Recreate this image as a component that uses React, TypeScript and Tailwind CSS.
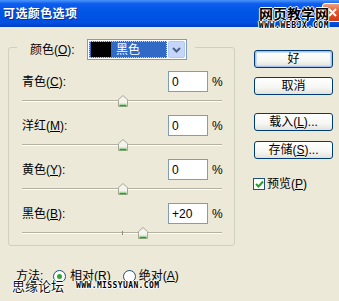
import React from "react";

const FONT = "font-['Liberation_Sans','Noto_Sans_CJK_SC',sans-serif]";

function Slider({ value }: { value: number }) {
  const left = 100 + value - 4.5;
  return (
    <div className="relative w-[200px] h-[18px] ml-[13px]">
      <div className="absolute left-0 right-0 top-[8px] h-[2px] border-t border-[#b4b1a2] bg-white"></div>
      <div className="absolute left-[100px] top-[7px] w-px h-[4px] bg-[#8a8778]"></div>
      <svg className="absolute top-[3px]" style={{ left }} width="10" height="12" viewBox="0 0 10 12">
        <path d="M0.5 4.5 L5 0.5 L9.5 4.5 L9.5 11.5 L0.5 11.5 Z" fill="#f4f3ee" stroke="#a9a795" />
        <path d="M1.5 10.5 L8.5 10.5" stroke="#21a121" strokeWidth="1.5" />
        <path d="M1.5 9.2 L8.5 9.2" stroke="#8ed88e" strokeWidth="1" />
      </svg>
    </div>
  );
}

function Row({ label, k, value, pos }: { label: string; k: string; value: string; pos: number }) {
  return (
    <div className="flex flex-col">
      <div className="flex items-center h-[21px] pl-[13px]">
        <span className="w-[146px] text-[12px] text-black leading-none">
          {label}(<u>{k}</u>):
        </span>
        <div className="w-[40px] h-[21px] border border-[#7f9db9] bg-white flex items-center pl-[3px] text-[12px] text-black">
          {value}
        </div>
        <span className="ml-[4px] text-[12px] text-black">%</span>
      </div>
      <Slider value={pos} />
    </div>
  );
}

function Btn({ children, def }: { children: React.ReactNode; def?: boolean }) {
  return (
    <div
      className={`w-[79px] h-[18px] rounded-[3px] border border-[#003c74] flex items-center justify-center text-[12px] text-black bg-[linear-gradient(180deg,#ffffff_0%,#f6f6f3_60%,#e3e2da_100%)] ${
        def ? "shadow-[inset_0_0_0_1px_#a7c2f0,inset_0_0_0_2px_#cddcf7]" : ""
      }`}
    >
      {children}
    </div>
  );
}

export default function App() {
  return (
    <div className={`relative w-[339px] h-[301px] overflow-hidden bg-[#ece9d8] ${FONT}`}>
      {/* Title bar */}
      <div className="relative h-[27px] flex items-center bg-[linear-gradient(180deg,#4a96fb_0%,#0e5cee_14%,#0055e5_45%,#004fe0_85%,#003fc2_100%)]">
        <span className="pl-[3px] text-[12px] font-bold text-white tracking-[0.4px] [text-shadow:1px_1px_0_#0a2c8a]">
          可选颜色选项
        </span>
        <div className="flex-1"></div>
        <div className="w-[21px] h-[19px] -mr-[4px] mb-[3px] rounded-[3px] border border-white bg-[linear-gradient(180deg,#f0a080_0%,#e2572f_45%,#cc3a18_100%)] flex items-center justify-center">
          <svg width="11" height="11" viewBox="0 0 11 11">
            <path d="M2 2 L9 9 M9 2 L2 9" stroke="#fff" strokeWidth="2" />
          </svg>
        </div>
        {/* watermark */}
        <div className="absolute left-[257px] top-[5px] w-[74px] flex flex-col items-center">
          <span className="text-[14px] leading-[16px] font-bold text-black font-['Noto_Sans_CJK_SC',sans-serif] [text-shadow:1px_0_0_#fff,-1px_0_0_#fff,0_1px_0_#fff,0_-1px_0_#fff]">
            网页教学网
          </span>
          <span className="text-[8px] leading-[9px] font-bold text-black tracking-[0.6px] font-['DejaVu_Sans_Mono',monospace] [text-shadow:1px_0_0_#fff,-1px_0_0_#fff,0_1px_0_#fff,0_-1px_0_#fff]">
            WWW.WEBJX.COM
          </span>
        </div>
      </div>

      {/* Body */}
      <div className="flex">
        <div className="flex flex-col ml-[8px] w-[227px]">
          <fieldset className="mt-[7px] border border-[#d0d0bf] rounded-[3px] pb-[3px]">
            <legend className="ml-[8px] pl-[13px] pr-[8px] pt-[5px]">
              <div className="flex items-center">
                <span className="w-[57px] text-[12px] text-black">
                  颜色(<u>O</u>):
                </span>
                <div className="w-[100px] h-[21px] border border-[#7f9db9] bg-white flex items-center p-[1px]">
                  <div className="flex-1 h-full bg-[#316ac5] border border-dotted border-[#c9d5ea] flex items-center pl-[1px]">
                    <div className="w-[20px] h-[15px] bg-black"></div>
                    <span className="ml-[5px] text-[12px] text-white">黑色</span>
                  </div>
                  <div className="w-[17px] h-full ml-[1px] rounded-[2px] bg-[#c6d6fb] border border-[#b4c8f4] flex items-center justify-center">
                    <svg width="9" height="6" viewBox="0 0 9 6">
                      <path d="M1 1 L4.5 4.5 L8 1" stroke="#4d6185" strokeWidth="2" fill="none" />
                    </svg>
                  </div>
                </div>
              </div>
            </legend>
            <div className="flex flex-col gap-[5px] pt-[11px]">
              <Row label="青色" k="C" value="0" pos={0} />
              <Row label="洋红" k="M" value="0" pos={0} />
              <Row label="黄色" k="Y" value="0" pos={0} />
              <Row label="黑色" k="B" value="+20" pos={20} />
            </div>
          </fieldset>
          <div className="flex items-center mt-[22px] ml-[8px] h-[16px] text-[12px] text-black">
            <span className="w-[37px]">方法:</span>
            <div className="w-[13px] h-[13px] rounded-full border border-[#1c5180] bg-white flex items-center justify-center">
              <div className="w-[5px] h-[5px] rounded-full bg-[#2fa62f]"></div>
            </div>
            <span className="ml-[4px]">
              相对(<u>R</u>)
            </span>
            <div className="ml-[12px] w-[13px] h-[13px] rounded-full border border-[#1c5180] bg-white"></div>
            <span className="ml-[3px]">
              绝对(<u>A</u>)
            </span>
          </div>
        </div>

        <div className="flex flex-col ml-[19px] mt-[23px]">
          <Btn def>好</Btn>
          <div className="mt-[9px]">
            <Btn>取消</Btn>
          </div>
          <div className="mt-[18px]">
            <Btn>
              载入(<u>L</u>)...
            </Btn>
          </div>
          <div className="mt-[10px]">
            <Btn>
              存储(<u>S</u>)...
            </Btn>
          </div>
          <div className="flex items-center mt-[16px] -ml-[1px]">
            <div className="w-[12px] h-[12px] border border-[#1c5180] bg-white flex items-center justify-center">
              <svg width="9" height="8" viewBox="0 0 9 8">
                <path d="M1 4 L3.5 6.5 L8 1.5" stroke="#21a121" strokeWidth="2" fill="none" />
              </svg>
            </div>
            <span className="ml-[2px] text-[12px] text-black">
              预览(<u>P</u>)
            </span>
          </div>
        </div>
      </div>

      {/* forum watermark */}
      <div className="absolute left-[12px] top-[279px] flex items-center">
        <span className="text-[13px] leading-[14px] text-[#111] font-['Noto_Sans_CJK_SC',sans-serif] [text-shadow:1px_0_0_#fff,-1px_0_0_#fff,0_1px_0_#fff,0_-1px_0_#fff]">
          思缘论坛
        </span>
        <span className="ml-[12px] text-[8px] font-bold text-black tracking-[0.4px] font-['DejaVu_Sans_Mono',monospace] [text-shadow:1px_0_0_#fff,-1px_0_0_#fff,0_1px_0_#fff,0_-1px_0_#fff]">
          WWW.MISSYUAN.COM
        </span>
      </div>
    </div>
  );
}
